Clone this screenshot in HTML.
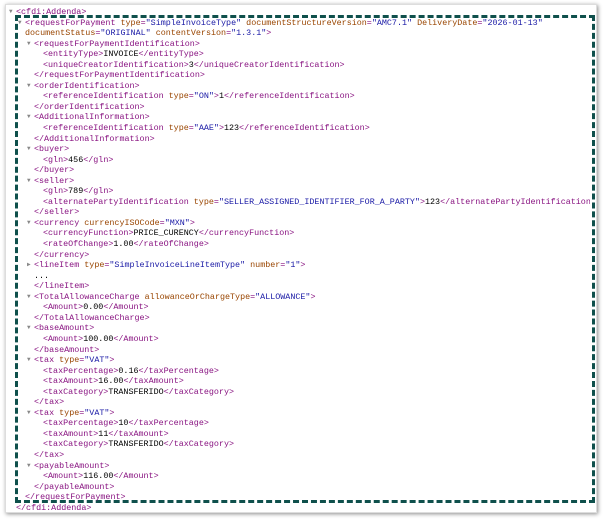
<!DOCTYPE html>
<html><head><meta charset="utf-8"><style>
html,body{margin:0;padding:0;background:#fff;width:606px;height:522px;overflow:hidden}
.panel{position:absolute;left:5px;top:4px;width:592px;height:509px;background:#fff;box-shadow:1px 1px 4px rgba(0,0,0,.45);border:1px solid #ddd;box-sizing:border-box}
.box{position:absolute;left:15px;top:15px;width:580px;height:488px;border:3px dashed #0f504c;box-sizing:border-box}
.code{position:absolute;left:0;top:7px;width:590px;height:510px;overflow:hidden;font-family:"Liberation Mono",monospace;font-size:8.4px;line-height:10.55px;color:#000}
.l{white-space:pre;position:relative;height:10.55px}
.t{color:#881280}.a{color:#994500}.v{color:#1a1aa6}
.tri{position:absolute;color:#888;font-size:6px;margin-left:-7px}
</style></head><body>
<div class="panel"></div>
<div class="box"></div>
<div class="code">
<div class="l" style="padding-left:16px"><span class="tri">▼</span><span class="t">&lt;cfdi:Addenda&gt;</span></div>
<div class="l" style="padding-left:25px"><span class="tri">▼</span><span class="t">&lt;requestForPayment</span> <span class="a">type</span><span class="t">=</span><span class="v">"SimpleInvoiceType"</span> <span class="a">documentStructureVersion</span><span class="t">=</span><span class="v">"AMC7.1"</span> <span class="a">DeliveryDate</span><span class="t">=</span><span class="v">"2026-01-13"</span></div>
<div class="l" style="padding-left:25px"><span class="a">documentStatus</span><span class="t">=</span><span class="v">"ORIGINAL"</span> <span class="a">contentVersion</span><span class="t">=</span><span class="v">"1.3.1"</span><span class="t">&gt;</span></div>
<div class="l" style="padding-left:34px"><span class="tri">▼</span><span class="t">&lt;requestForPaymentIdentification&gt;</span></div>
<div class="l" style="padding-left:43px"><span class="t">&lt;entityType&gt;</span>INVOICE<span class="t">&lt;/entityType&gt;</span></div>
<div class="l" style="padding-left:43px"><span class="t">&lt;uniqueCreatorIdentification&gt;</span>3<span class="t">&lt;/uniqueCreatorIdentification&gt;</span></div>
<div class="l" style="padding-left:34px"><span class="t">&lt;/requestForPaymentIdentification&gt;</span></div>
<div class="l" style="padding-left:34px"><span class="tri">▼</span><span class="t">&lt;orderIdentification&gt;</span></div>
<div class="l" style="padding-left:43px"><span class="t">&lt;referenceIdentification</span> <span class="a">type</span><span class="t">=</span><span class="v">"ON"</span><span class="t">&gt;</span>1<span class="t">&lt;/referenceIdentification&gt;</span></div>
<div class="l" style="padding-left:34px"><span class="t">&lt;/orderIdentification&gt;</span></div>
<div class="l" style="padding-left:34px"><span class="tri">▼</span><span class="t">&lt;AdditionalInformation&gt;</span></div>
<div class="l" style="padding-left:43px"><span class="t">&lt;referenceIdentification</span> <span class="a">type</span><span class="t">=</span><span class="v">"AAE"</span><span class="t">&gt;</span>123<span class="t">&lt;/referenceIdentification&gt;</span></div>
<div class="l" style="padding-left:34px"><span class="t">&lt;/AdditionalInformation&gt;</span></div>
<div class="l" style="padding-left:34px"><span class="tri">▼</span><span class="t">&lt;buyer&gt;</span></div>
<div class="l" style="padding-left:43px"><span class="t">&lt;gln&gt;</span>456<span class="t">&lt;/gln&gt;</span></div>
<div class="l" style="padding-left:34px"><span class="t">&lt;/buyer&gt;</span></div>
<div class="l" style="padding-left:34px"><span class="tri">▼</span><span class="t">&lt;seller&gt;</span></div>
<div class="l" style="padding-left:43px"><span class="t">&lt;gln&gt;</span>789<span class="t">&lt;/gln&gt;</span></div>
<div class="l" style="padding-left:43px"><span class="t">&lt;alternatePartyIdentification</span> <span class="a">type</span><span class="t">=</span><span class="v">"SELLER_ASSIGNED_IDENTIFIER_FOR_A_PARTY"</span><span class="t">&gt;</span>123<span class="t">&lt;/alternatePartyIdentification&gt;</span></div>
<div class="l" style="padding-left:34px"><span class="t">&lt;/seller&gt;</span></div>
<div class="l" style="padding-left:34px"><span class="tri">▼</span><span class="t">&lt;currency</span> <span class="a">currencyISOCode</span><span class="t">=</span><span class="v">"MXN"</span><span class="t">&gt;</span></div>
<div class="l" style="padding-left:43px"><span class="t">&lt;currencyFunction&gt;</span>PRICE_CURENCY<span class="t">&lt;/currencyFunction&gt;</span></div>
<div class="l" style="padding-left:43px"><span class="t">&lt;rateOfChange&gt;</span>1.00<span class="t">&lt;/rateOfChange&gt;</span></div>
<div class="l" style="padding-left:34px"><span class="t">&lt;/currency&gt;</span></div>
<div class="l" style="padding-left:34px"><span class="tri">▶</span><span class="t">&lt;lineItem</span> <span class="a">type</span><span class="t">=</span><span class="v">"SimpleInvoiceLineItemType"</span> <span class="a">number</span><span class="t">=</span><span class="v">"1"</span><span class="t">&gt;</span></div>
<div class="l" style="padding-left:34px">...</div>
<div class="l" style="padding-left:34px"><span class="t">&lt;/lineItem&gt;</span></div>
<div class="l" style="padding-left:34px"><span class="tri">▼</span><span class="t">&lt;TotalAllowanceCharge</span> <span class="a">allowanceOrChargeType</span><span class="t">=</span><span class="v">"ALLOWANCE"</span><span class="t">&gt;</span></div>
<div class="l" style="padding-left:43px"><span class="t">&lt;Amount&gt;</span>0.00<span class="t">&lt;/Amount&gt;</span></div>
<div class="l" style="padding-left:34px"><span class="t">&lt;/TotalAllowanceCharge&gt;</span></div>
<div class="l" style="padding-left:34px"><span class="tri">▼</span><span class="t">&lt;baseAmount&gt;</span></div>
<div class="l" style="padding-left:43px"><span class="t">&lt;Amount&gt;</span>100.00<span class="t">&lt;/Amount&gt;</span></div>
<div class="l" style="padding-left:34px"><span class="t">&lt;/baseAmount&gt;</span></div>
<div class="l" style="padding-left:34px"><span class="tri">▼</span><span class="t">&lt;tax</span> <span class="a">type</span><span class="t">=</span><span class="v">"VAT"</span><span class="t">&gt;</span></div>
<div class="l" style="padding-left:43px"><span class="t">&lt;taxPercentage&gt;</span>0.16<span class="t">&lt;/taxPercentage&gt;</span></div>
<div class="l" style="padding-left:43px"><span class="t">&lt;taxAmount&gt;</span>16.00<span class="t">&lt;/taxAmount&gt;</span></div>
<div class="l" style="padding-left:43px"><span class="t">&lt;taxCategory&gt;</span>TRANSFERIDO<span class="t">&lt;/taxCategory&gt;</span></div>
<div class="l" style="padding-left:34px"><span class="t">&lt;/tax&gt;</span></div>
<div class="l" style="padding-left:34px"><span class="tri">▼</span><span class="t">&lt;tax</span> <span class="a">type</span><span class="t">=</span><span class="v">"VAT"</span><span class="t">&gt;</span></div>
<div class="l" style="padding-left:43px"><span class="t">&lt;taxPercentage&gt;</span>10<span class="t">&lt;/taxPercentage&gt;</span></div>
<div class="l" style="padding-left:43px"><span class="t">&lt;taxAmount&gt;</span>11<span class="t">&lt;/taxAmount&gt;</span></div>
<div class="l" style="padding-left:43px"><span class="t">&lt;taxCategory&gt;</span>TRANSFERIDO<span class="t">&lt;/taxCategory&gt;</span></div>
<div class="l" style="padding-left:34px"><span class="t">&lt;/tax&gt;</span></div>
<div class="l" style="padding-left:34px"><span class="tri">▼</span><span class="t">&lt;payableAmount&gt;</span></div>
<div class="l" style="padding-left:43px"><span class="t">&lt;Amount&gt;</span>116.00<span class="t">&lt;/Amount&gt;</span></div>
<div class="l" style="padding-left:34px"><span class="t">&lt;/payableAmount&gt;</span></div>
<div class="l" style="padding-left:25px"><span class="t">&lt;/requestForPayment&gt;</span></div>
<div class="l" style="padding-left:16px"><span class="t">&lt;/cfdi:Addenda&gt;</span></div>
</div>
</body></html>
